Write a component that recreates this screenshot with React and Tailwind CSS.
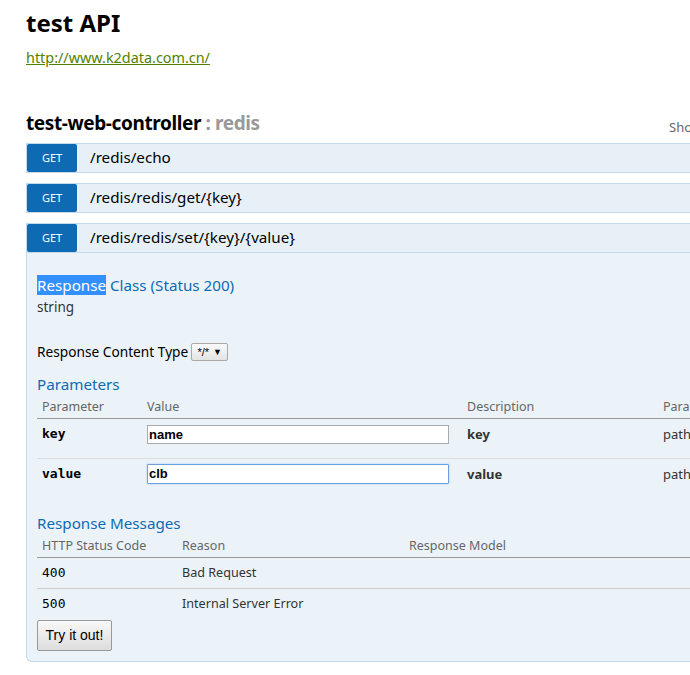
import React from "react";

function OpRow({ path }) {
  return (
    <div className="flex h-[30px] border border-[#c3d9ec] bg-[#e7f0f7]">
      <div className="w-[50px] h-[28px] bg-[#0f6ab4] rounded-[2px] text-white text-[11px] flex items-center justify-center pt-[1px]">
        GET
      </div>
      <div className="pl-[13px] text-[15.2px] text-black flex items-center h-[27px]">{path}</div>
    </div>
  );
}

export default function App() {
  return (
    <div className="w-[690px] h-[675px] overflow-hidden bg-white" style={{ fontFamily: '"Noto Sans", "Open Sans", sans-serif' }}>
      <div className="w-[1000px] pl-[26px]">
        <div className="pt-[8px] text-[24px] font-bold text-black leading-[30px]">test API</div>
        <div className="mt-[11px] text-[14.4px] leading-[18px]">
          <a className="text-[#547f00] underline">http://www.k2data.com.cn/</a>
        </div>
        <div className="mt-[42px] flex items-end h-[28px]">
          <div className="w-[643px] text-[19px] tracking-[-0.4px] font-bold leading-[28px]">
            test-web-controller <span className="text-[#999]">: redis</span>
          </div>
          <div className="text-[13px] text-[#666] leading-[20px] whitespace-nowrap">Show/Hide | List Operations | Expand Operations</div>
        </div>
        <div className="mt-[6px] w-[940px] flex flex-col gap-[10px]">
          <OpRow path="/redis/echo" />
          <OpRow path="/redis/redis/get/{key}" />
          <div>
            <OpRow path="/redis/redis/set/{key}/{value}" />
            <div className="bg-[#ebf3f9] border border-t-0 border-[#c3d9ec] rounded-bl-[6px] px-[10px] pb-[10px] h-[409px]">
              <div className="pt-[22px] text-[15.2px] text-[#0f6ab4] leading-[20px]">
                <span className="bg-[#3390ff] text-white">Response</span> Class (Status 200)
              </div>
              <div className="mt-[3px] text-[13.5px] text-[#333] leading-[18px]">string</div>
              <div className="mt-[26px] flex items-center h-[20px] text-[13.7px] text-black">
                <span>Response Content Type</span>
                <span className="ml-[3px] h-[18px] w-[37px] border border-[#aaa] rounded-[2px] bg-gradient-to-b from-[#fafafa] to-[#e4e4e4] text-[11px] flex items-center justify-center gap-[4px] leading-none" style={{ fontFamily: '"Liberation Sans", sans-serif' }}>
                  */* <span className="text-[9px]">▼</span>
                </span>
              </div>
              <div className="mt-[12px] text-[15.2px] text-[#0f6ab4] leading-[20px]">Parameters</div>
              <div className="mt-[3px]">
                <div className="flex h-[22px] border-b border-[#999] text-[12.5px] text-[#666] items-center">
                  <div className="w-[105px] pl-[5px]">Parameter</div>
                  <div className="w-[320px] pl-[5px]">Value</div>
                  <div className="w-[196px] pl-[5px]">Description</div>
                  <div className="pl-[5px] whitespace-nowrap">Parameter Type</div>
                </div>
                <div className="flex h-[40px] border-b border-[#ddd]">
                  <div className="w-[105px] pl-[5px] pt-[5px] text-[13px] font-bold text-black" style={{ fontFamily: '"DejaVu Sans Mono", monospace' }}>key</div>
                  <div className="w-[320px] pl-[5px] pt-[6px]">
                    <div className="w-[302px] h-[19px] border border-[#aaa] bg-white text-[13px] font-bold text-black pl-[1px] leading-[17px]" style={{ fontFamily: '"Liberation Sans", sans-serif' }}>name</div>
                  </div>
                  <div className="w-[196px] pl-[5px] pt-[6px] text-[13px] font-bold text-[#333]">key</div>
                  <div className="pl-[5px] pt-[6px] text-[13px] text-[#333]">path</div>
                </div>
                <div className="flex h-[40px]">
                  <div className="w-[105px] pl-[5px] pt-[5px] text-[13px] font-bold text-black" style={{ fontFamily: '"DejaVu Sans Mono", monospace' }}>value</div>
                  <div className="w-[320px] pl-[5px] pt-[5px]">
                    <div className="w-[302px] h-[20px] border border-[#6a9fe0] shadow-[0_0_2px_#9cc4f2] rounded-[1px] bg-white text-[13px] font-bold text-black pl-[1px] leading-[18px]" style={{ fontFamily: '"Liberation Sans", sans-serif' }}>clb</div>
                  </div>
                  <div className="w-[196px] pl-[5px] pt-[6px] text-[13px] font-bold text-[#333]">value</div>
                  <div className="pl-[5px] pt-[6px] text-[13px] text-[#333]">path</div>
                </div>
              </div>
              <div className="mt-[14px] text-[15.2px] text-[#0f6ab4] leading-[20px]">Response Messages</div>
              <div className="mt-[3px]">
                <div className="flex h-[22px] border-b border-[#999] text-[12.5px] text-[#666] items-center">
                  <div className="w-[140px] pl-[5px]">HTTP Status Code</div>
                  <div className="w-[227px] pl-[5px]">Reason</div>
                  <div className="pl-[5px]">Response Model</div>
                </div>
                <div className="flex h-[31px] border-b border-[#ccc]">
                  <div className="w-[140px] pl-[5px] pt-[5px] text-[13px] text-black" style={{ fontFamily: '"DejaVu Sans Mono", monospace' }}>400</div>
                  <div className="w-[227px] pl-[5px] pt-[6px] text-[12.6px] text-[#333]">Bad Request</div>
                </div>
                <div className="flex h-[29px]">
                  <div className="w-[140px] pl-[5px] pt-[5px] text-[13px] text-black" style={{ fontFamily: '"DejaVu Sans Mono", monospace' }}>500</div>
                  <div className="w-[227px] pl-[5px] pt-[6px] text-[12.6px] text-[#333]">Internal Server Error</div>
                </div>
              </div>
              <button className="mt-[2px] w-[75px] h-[31px] border border-[#999] rounded-[2px] bg-gradient-to-b from-[#f8f8f8] to-[#dddddd] text-[14px] text-black" style={{ fontFamily: '"Liberation Sans", sans-serif' }}>
                Try it out!
              </button>
            </div>
          </div>
        </div>
      </div>
    </div>
  );
}
